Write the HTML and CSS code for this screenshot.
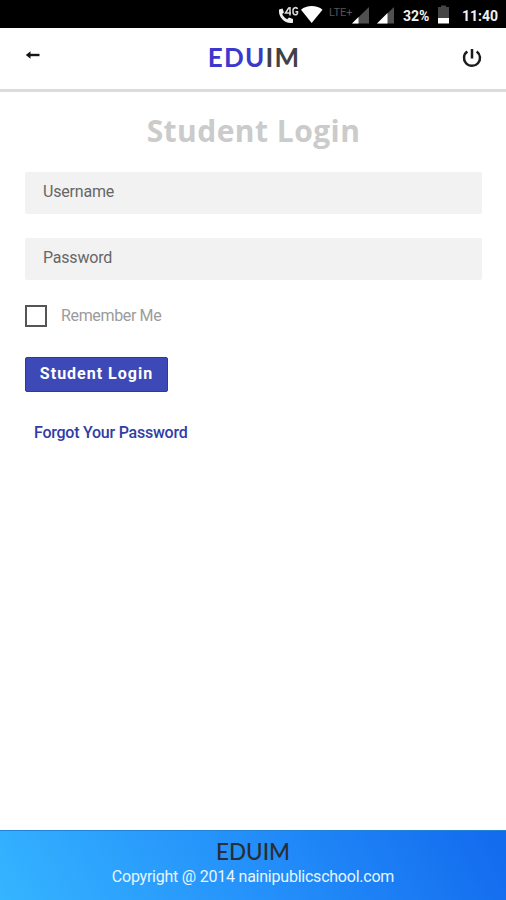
FILE: index.html
```html
<!DOCTYPE html>
<html lang="en">
<head>
<meta charset="utf-8">
<meta name="viewport" content="width=device-width, initial-scale=1">
<title>EDUIM</title>
<link rel="stylesheet" href="styles.css">
</head>
<body>
<div class="statusbar">
  <svg class="calls" width="54" height="28" viewBox="0 0 54 28">
    <path d="M4 9.500l3.500-1 1.500 4-1.800 1.500c1 2.500 2.600 4 5 5.200l1.800-1.800 4 1.600v3.700c-7 2-15-5-14-13.200z" fill="#eee"/>
    <path d="M14 7.500L10.500 13H16M15 7v8.500M22.500 9c-.7-2-4.500-2-4.500 1.500V12c0 3.500 4.500 3.500 4.500.8v-1H20.500" fill="none" stroke="#ddd" stroke-width="1.500"/>
    <path d="M26 9.800C31.500 4.800 42 4.800 47.500 9.800L36.700 23z" fill="#fff"/>
  </svg>
  <span class="lte">LTE+</span>
  <svg class="signal" width="18" height="28" viewBox="0 0 18 28">
    <path d="M17 7v16.500H0z" fill="#505050"/><path d="M0 23.500L6.500 17v6.500z" fill="#fff"/>
  </svg>
  <svg class="signal second" width="18" height="28" viewBox="0 0 18 28">
    <path d="M17 7v16.500H0z" fill="#505050"/><path d="M0 23.500L10.500 13v10.500z" fill="#fff"/>
  </svg>
  <span class="percent">32%</span>
  <svg class="battery" width="13" height="28" viewBox="0 0 13 28">
    <path d="M1 7h3V5.500h5V7h3v11H1z" fill="#454545"/><path d="M1 18h11v5.500H1z" fill="#fff"/>
  </svg>
  <span class="clock">11:40</span>
</div>
<header class="appbar">
  <svg class="back" width="16" height="12" viewBox="0 0 16 12">
    <path d="M4 6h10.500" stroke="#151515" stroke-width="2.400"/><path d="M.8 6L5.500 2.200v7.600z" fill="#151515"/>
  </svg>
  <div class="logo"><span class="edu">EDU</span>IM</div>
  <svg class="power" width="22" height="22" viewBox="0 0 22 22">
    <path d="M6.300 4.400a8 8 0 1 0 9.400 0M11 2v9.500" fill="none" stroke="#1c1c1c" stroke-width="2.500"/>
  </svg>
</header>
<main>
  <h1>Student Login</h1>
  <form>
    <div class="field">Username</div>
    <div class="field">Password</div>
    <label class="remember"><span class="box"></span><span class="remember-text">Remember Me</span></label>
    <button type="button"><span>Student Login</span></button>
    <a class="forgot">Forgot Your Password</a>
  </form>
</main>
<footer>
  <div class="brand">EDUIM</div>
  <div class="copyright">Copyright @ 2014 nainipublicschool.com</div>
</footer>
</body>
</html>
```
FILE: styles.css
```css
* { box-sizing: border-box; }
body {
  margin: 0;
  height: 900px;
  display: flex;
  flex-direction: column;
  overflow: hidden;
  background: #fff;
  font-family: Roboto, sans-serif;
  font-size: 16px;
}
.statusbar {
  height: 28px;
  display: flex;
  align-items: center;
  padding-left: 275px;
  background: #000;
  color: #f2f2f2;
  font-weight: 700;
  white-space: nowrap;
}
.statusbar svg { flex: none; }
.lte {
  width: 23px;
  margin-bottom: 4px;
  color: #555;
  font-size: 11px;
  font-weight: 400;
}
.second { margin-left: 7px; }
.percent { width: 27px; margin: 3px 0 0 8px; font-size: 14px; }
.battery { margin-left: 7px; }
.clock { margin: 3px 0 0 12px; font-size: 14px; }
.appbar {
  height: 64px;
  display: flex;
  align-items: center;
  justify-content: space-between;
  padding: 0 23px 3px 25px;
  border-bottom: 3px solid #dcdcdc;
}
.back { margin-bottom: 5px; }
.power { margin-top: 1px; }
.logo {
  margin-left: 6px;
  color: #414145;
  font-family: Lato, sans-serif;
  font-size: 26px;
  font-weight: 700;
  letter-spacing: 1.2px;
}
.edu { color: #3d38cc; }
main { flex: 1; padding: 18px 24px 0 25px; }
h1 {
  margin: 0;
  height: 62px;
  color: #cbcbcb;
  font: 700 30px/41px "Open Sans", sans-serif;
  letter-spacing: .45px;
  text-align: center;
}
form { display: flex; flex-direction: column; align-items: flex-start; }
.field {
  width: 100%;
  height: 42px;
  margin-bottom: 24px;
  padding-left: 18px;
  border-radius: 2px;
  background: #f2f2f2;
  color: #666;
  line-height: 39px;
  letter-spacing: -.2px;
}
.remember { display: flex; align-items: center; height: 22px; margin-top: 1px; }
.box { width: 22px; height: 22px; border: 2px solid #555; }
.remember-text { margin: -2px 0 0 14px; color: #9b9b9b; letter-spacing: -.35px; }
button {
  width: 143px;
  height: 35px;
  margin: 30px 0 0;
  padding: 0 0 2px;
  border: 1px solid #3038a0;
  border-radius: 2px;
  background: #3d49b7;
  color: #fff;
  font: 700 16px/20px Roboto, sans-serif;
  letter-spacing: 1px;
  white-space: nowrap;
}
.forgot {
  margin: 31px 0 0 9px;
  color: #303da5;
  font-weight: 500;
  line-height: 20px;
  letter-spacing: -.24px;
}
footer {
  height: 70px;
  padding-top: 7px;
  border-top: 1px solid #2083d8;
  background: linear-gradient(60deg, #35b4ff, #2490fa 50%, #1269ed);
  text-align: center;
}
.brand { color: #292d34; font: 500 22.5px/28px Lato, sans-serif; }
.copyright { color: #e4f5ff; line-height: 22px; letter-spacing: -.23px; }
```
